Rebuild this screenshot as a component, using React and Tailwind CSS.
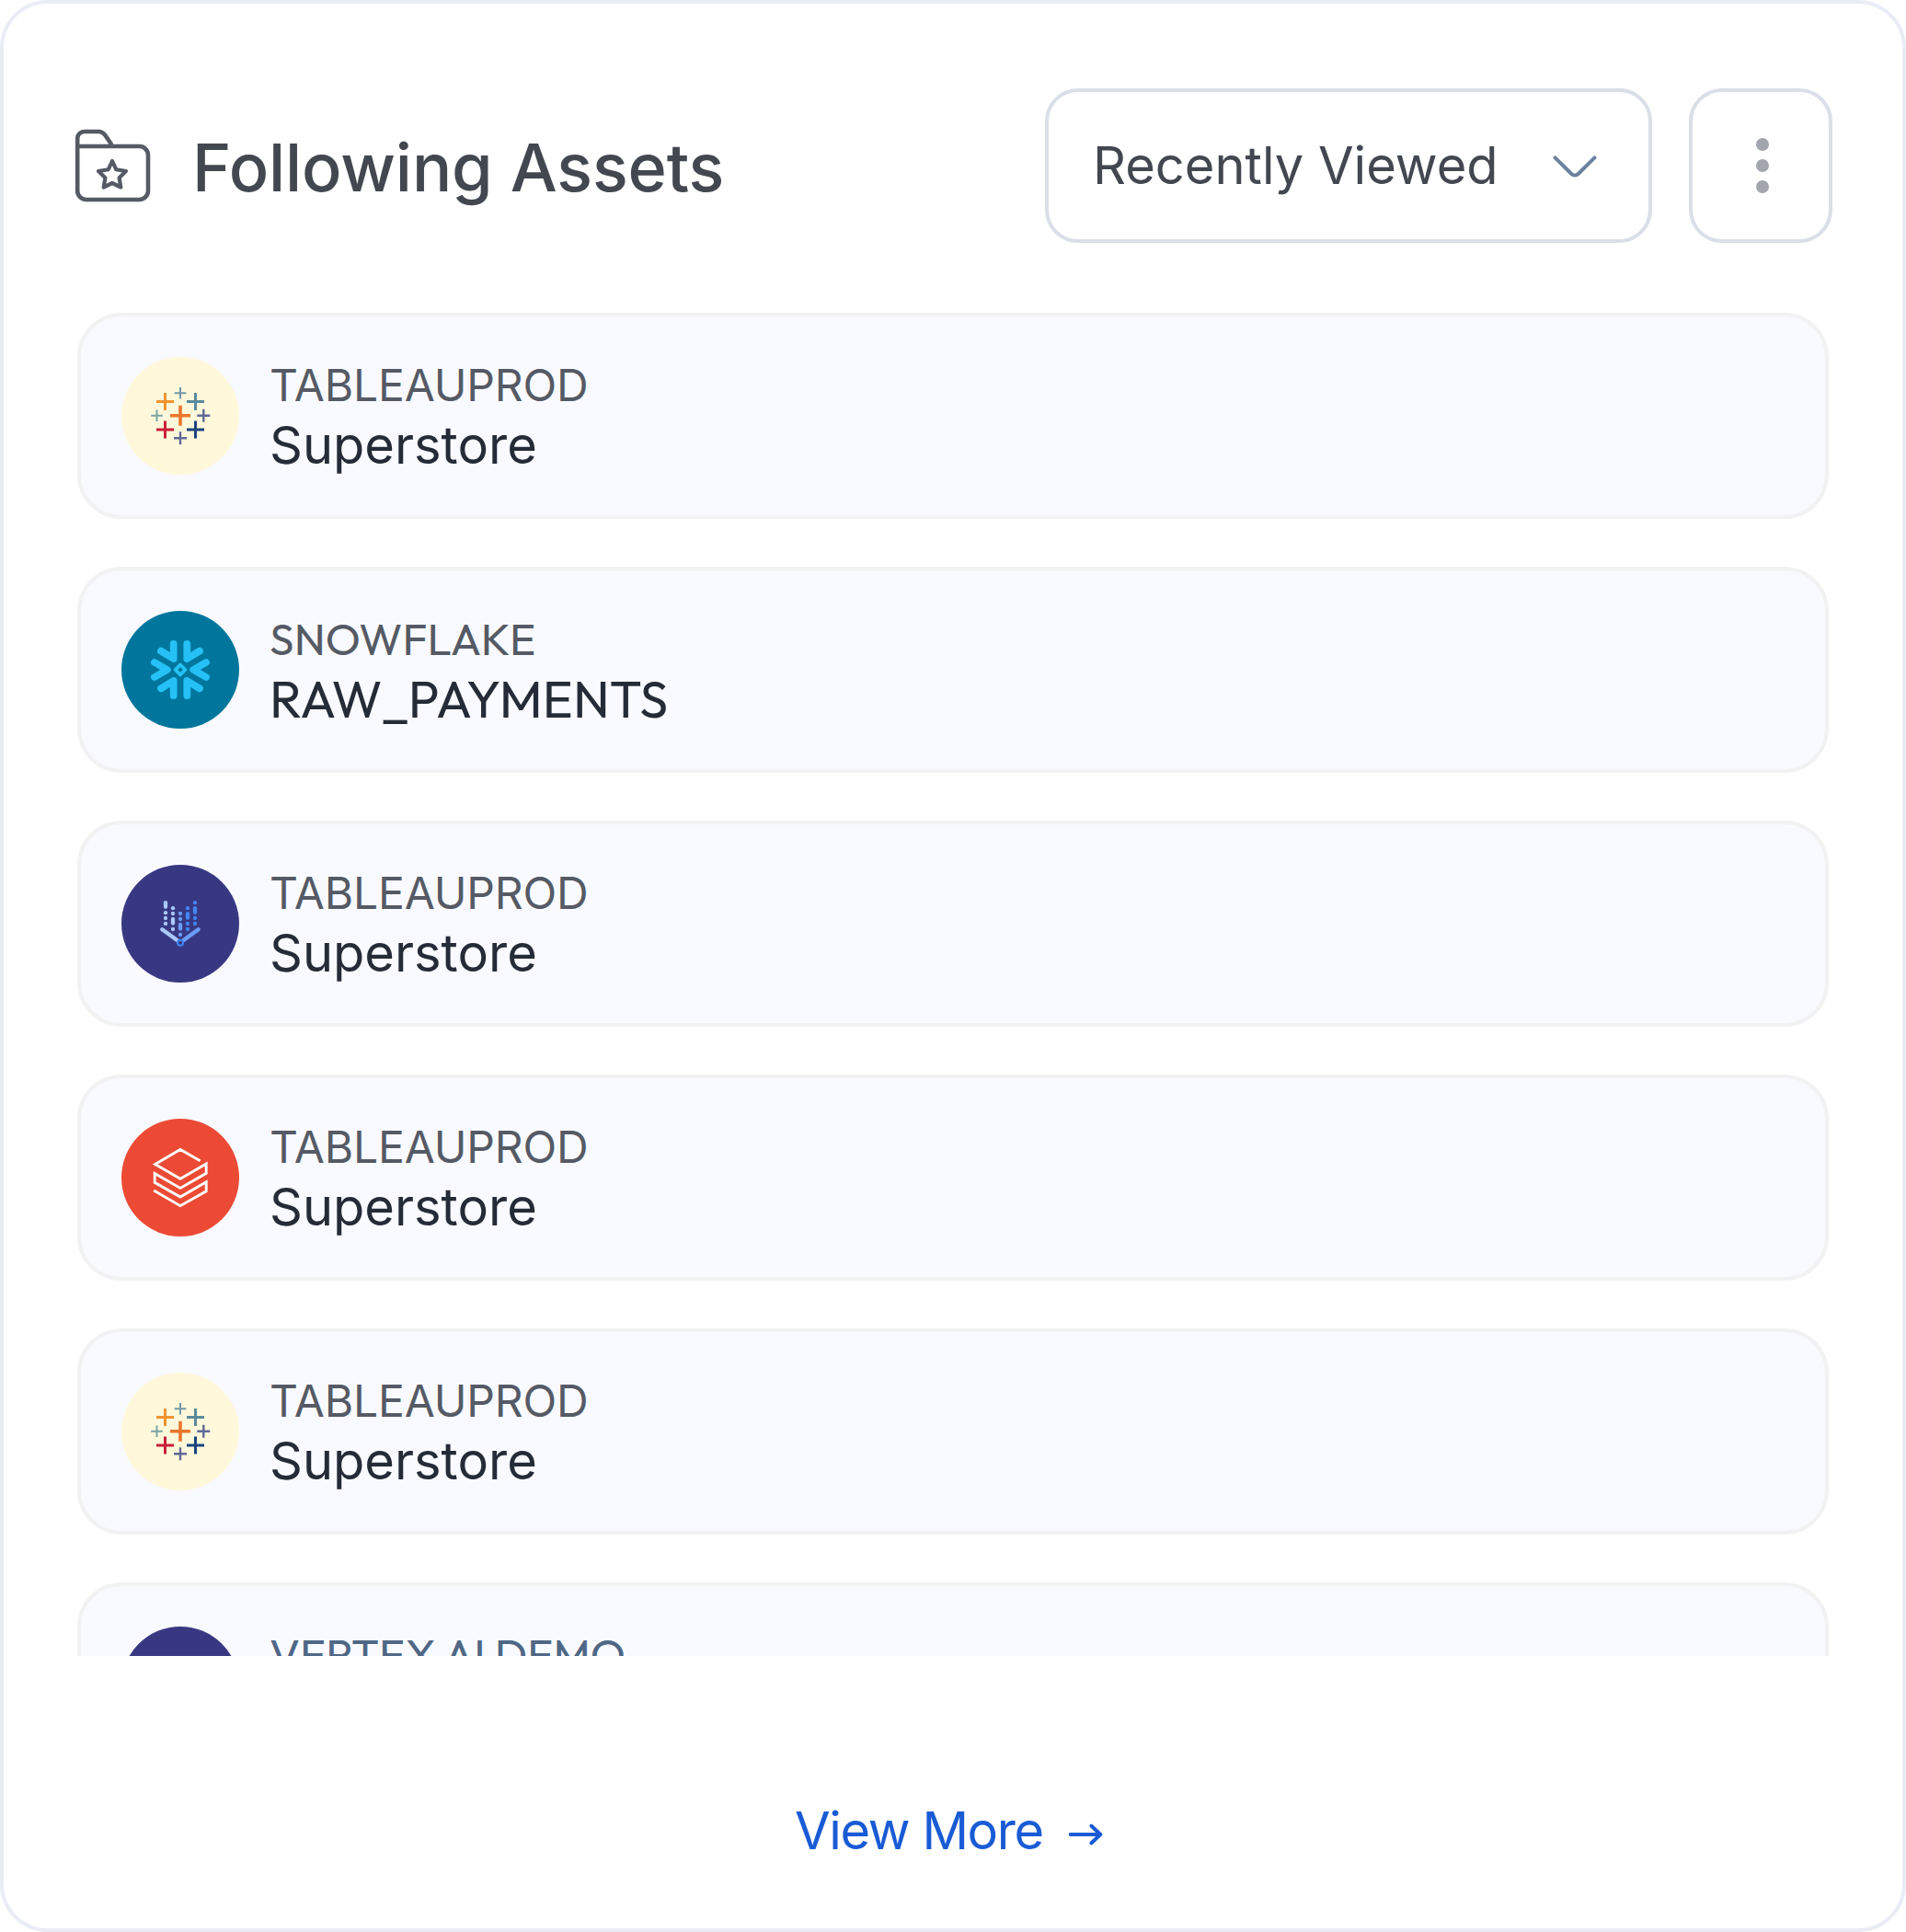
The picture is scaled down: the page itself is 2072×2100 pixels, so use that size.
function FolderStarIcon() {
  return (
    <svg className="-mt-2 h-[92px] w-[86px] shrink-0" viewBox="0 0 86 92" fill="none" stroke="#555a65" strokeWidth="4.6" strokeLinejoin="round">
      <path d="M4.2 29V20.5a7.5 7.5 0 0 1 7.5-7.5H27c3.2 0 5.4 1.2 7.2 3.8L41.5 27.5" />
      <path d="M4.2 29H71.5a9.5 9.5 0 0 1 9.5 9.5v39a9.5 9.5 0 0 1-9.5 9.5H13.7a9.5 9.5 0 0 1-9.5-9.5V29Z" />
      <path
        strokeWidth="4.2"
        d="M42 45L46.2 54.2L57 56L49.6 63.3L51.3 73.5L42 69L32.7 73.5L34.4 63.3L27 56L37.8 54.2Z"
      />
    </svg>
  );
}

function TableauLogo() {
  const marks = [
    [64, 39.3, 6.3, 2, "#7099a6"],
    [47.5, 48.4, 9.5, 3, "#ef942f"],
    [80.5, 48.4, 9.5, 3, "#5b8a9c"],
    [38.5, 63.8, 6.3, 2, "#7ba3a3"],
    [64, 63.8, 11, 3.6, "#ea762c"],
    [89.3, 63.8, 7, 2.4, "#5f6897"],
    [47.5, 79, 9.5, 3, "#c91f37"],
    [80.5, 79, 9.5, 3, "#1b447e"],
    [64, 88.3, 7, 2.4, "#5f6897"],
  ];
  return (
    <svg className="size-32" viewBox="0 0 128 128">
      {marks.map(([x, y, r, w, color]) => (
        <path key={`${x}-${y}`} stroke={color} strokeWidth={w} d={`M${x - r} ${y}h${2 * r}M${x} ${y - r}v${2 * r}`} />
      ))}
    </svg>
  );
}

function SnowflakeLogo() {
  return (
    <svg className="size-32" viewBox="0 0 128 128" fill="none" stroke="#25c1f6" strokeWidth="7.8" strokeLinecap="round" strokeLinejoin="round">
      <path d="M56.7 36V52L43 43.7M71.3 36V52L85 43.7M56.7 92V76L43 84.3M71.3 92V76L85 84.3" />
      <path d="M36 56L49.8 64L36 72M92 56L78.2 64L92 72" />
      <path strokeWidth="3.8" d="M64 58.6L69.4 64L64 69.4L58.6 64Z" />
    </svg>
  );
}

function VertexLogo() {
  const columns = [
    { x: 48, color: "#aac8fb", bar: [41.2, 45.8], dots: [52.2, 58, 64] },
    { x: 56, color: "#aac8fb", bar: [59, 63.6], dots: [47.2, 53, 70] },
    { x: 64, color: "#699cf6", bar: [65, 69.6], dots: [53, 59, 76] },
    { x: 72, color: "#4285f4", bar: [53.2, 57.8], dots: [47.2, 64, 70] },
    { x: 80, color: "#4285f4", bar: [47.2, 51.8], dots: [41.2, 58, 64] },
  ];
  return (
    <svg className="size-32" viewBox="0 0 128 128" fill="none" strokeLinecap="round">
      {columns.map(({ x, color, bar, dots }) => (
        <g key={x}>
          <path stroke={color} strokeWidth="4.3" d={`M${x} ${bar[0]}V${bar[1]}`} />
          {dots.map((y) => (
            <circle key={y} cx={x} cy={y} r="2.15" fill={color} />
          ))}
        </g>
      ))}
      <path stroke="#aac8fb" strokeWidth="4.3" d="M44.3 70.2L60.5 82" />
      <path stroke="#699cf6" strokeWidth="4.3" d="M83.7 70.2L67.5 82" />
      <circle cx="64" cy="84.8" r="3" stroke="#4285f4" strokeWidth="2.1" fill="#383882" />
    </svg>
  );
}

function DatabricksLogo() {
  return (
    <svg className="size-32" viewBox="0 0 128 128" fill="none" stroke="#fff" strokeWidth="2.9">
      <path d="M85.6 45.8L64 33.5L36.6 49.4L64 65.3L92.2 49V59.3L64 75.4L36.2 59.4V69.3L64 85L92.2 68.8V78.8L64 94.7L35.2 78" />
    </svg>
  );
}

const kinds = {
  tableau: { Logo: TableauLogo, bg: "bg-[#fff8db]" },
  snowflake: { Logo: SnowflakeLogo, bg: "bg-[#00769d]" },
  vertex: { Logo: VertexLogo, bg: "bg-[#383882]" },
  databricks: { Logo: DatabricksLogo, bg: "bg-[#ec4a34]" },
};

const assets = [
  { kind: "tableau", source: "TABLEAUPROD", name: "Superstore" },
  { kind: "snowflake", source: "SNOWFLAKE", name: "RAW_PAYMENTS", outfit: true },
  { kind: "vertex", source: "TABLEAUPROD", name: "Superstore" },
  { kind: "databricks", source: "TABLEAUPROD", name: "Superstore" },
  { kind: "tableau", source: "TABLEAUPROD", name: "Superstore" },
  { kind: "vertex", source: "VERTEX AI DEMO", outfit: true, accent: true },
];

function AssetRow({ kind, source, name, outfit, accent }) {
  const { Logo, bg } = kinds[kind];
  return (
    <li className="flex h-56 shrink-0 items-center gap-[33px] rounded-[48px] border-4 border-[#f2f2f2] bg-[#f9faff] px-11">
      <div className={`size-32 shrink-0 rounded-full ${bg}`}>
        <Logo />
      </div>
      <div className={outfit ? "pt-1 font-['Outfit','Lato',sans-serif]" : "pt-[3px]"}>
        <p
          className={`text-5xl ${outfit ? "leading-[59px]" : "leading-[60px] tracking-[-0.15px]"} ${accent ? "text-[#4f6785]" : "text-[#555a65]"}`}
        >
          {source}
        </p>
        <p className={`text-[56px] text-[#252b37] ${outfit ? "min-h-[72px] leading-[72px]" : "leading-[70px]"}`}>{name}</p>
      </div>
    </li>
  );
}

export default function App() {
  return (
    <main className="flex h-[2100px] w-[2072px] flex-col rounded-[52px] border-4 border-[#eaecf5] bg-white px-20 pt-[92px] font-['Inter',sans-serif]">
      <header className="flex h-42 shrink-0 items-center">
        <div className="-ml-1 flex items-center">
          <FolderStarIcon />
          <h1 className="ml-[43px] pt-1 text-[72px] leading-[88px] font-medium tracking-[-0.12px] text-[#434750]">
            Following Assets
          </h1>
        </div>
        <button className="mr-10 ml-auto flex h-42 w-[660px] items-center justify-between rounded-[36px] border-4 border-[#dadfe7] pr-14 pl-12 text-[56px] leading-[68px] text-[#434750]">
          Recently Viewed
          <svg className="h-7 w-12" viewBox="0 0 48 28" fill="none" stroke="#6b829e" strokeWidth="4" strokeLinecap="round">
            <path d="M2.5 5.3L20.3 23c2.1 2 5.3 2 7.4 0L45.5 5.3" />
          </svg>
        </button>
        <button className="-mr-1 flex h-42 w-39 flex-col items-center justify-center gap-[9.4px] rounded-[36px] border-4 border-[#dadfe7] pl-1">
          <span className="size-3.5 rounded-full bg-[#a3a6ad]" />
          <span className="size-3.5 rounded-full bg-[#a3a6ad]" />
          <span className="size-3.5 rounded-full bg-[#a3a6ad]" />
        </button>
      </header>
      <ul className="mt-19 flex h-[1460px] shrink-0 flex-col gap-13 overflow-hidden">
        {assets.map((asset, i) => (
          <AssetRow key={i} {...asset} />
        ))}
      </ul>
      <a className="mt-[156px] ml-[780px] flex items-center self-start text-[56px] leading-[68px] tracking-[-1.4px] text-[#195bd5]">
        View More
        <svg className="mt-2 ml-[27px] h-6 w-[38px]" viewBox="0 0 38 24" fill="none" stroke="#195bd5" strokeWidth="4" strokeLinecap="round" strokeLinejoin="round">
          <path d="M2.7 12H35.3M25.5 2.7L35.3 12L25.5 21.3" />
        </svg>
      </a>
    </main>
  );
}
